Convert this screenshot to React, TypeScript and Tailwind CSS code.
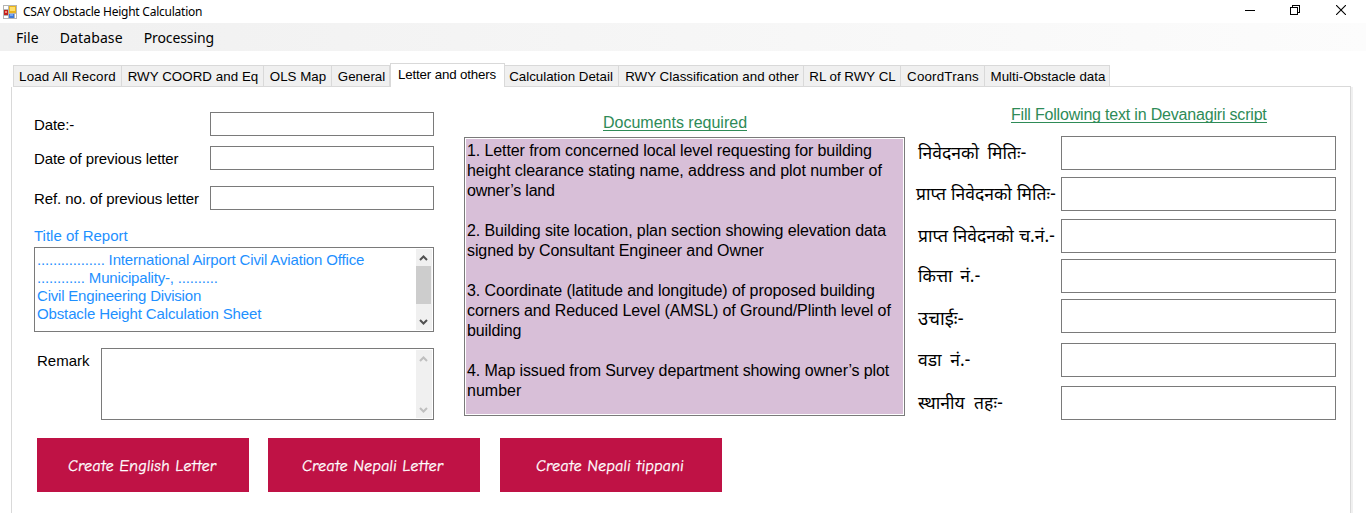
import type { ReactNode } from "react";

function AppIcon() {
  return (
    <svg width="14" height="14" viewBox="0 0 14 14" shapeRendering="crispEdges">
      <rect width="14" height="14" fill="#b4b4b4" />
      <rect x="1" y="1" width="4" height="3" fill="#fff" />
      <rect x="1" y="5" width="4" height="5" fill="#c3201c" />
      <rect x="2" y="6" width="2" height="2" fill="#ef8a78" />
      <rect x="6" y="1" width="7" height="7" fill="#e9b31c" />
      <rect x="7" y="2" width="5" height="4" fill="#ffdf6b" />
      <rect x="1" y="11" width="4" height="2" fill="#fff" />
      <rect x="6" y="9" width="5" height="4" fill="#3f78d8" />
      <rect x="7" y="9" width="3" height="2" fill="#78a7f2" />
      <rect x="12" y="9" width="1" height="4" fill="#fff" />
    </svg>
  );
}

function WindowButtons() {
  return (
    <div className="ml-auto flex items-center pr-5 pb-[3px]">
      <svg width="10" height="10" viewBox="0 0 10 10" shapeRendering="crispEdges" className="mr-[35px]">
        <path d="M0 5.5h10" stroke="#000" />
      </svg>
      <svg width="10" height="10" viewBox="0 0 10 10" fill="none" stroke="#000" shapeRendering="crispEdges" className="mr-[36px]">
        <path d="M.5 2.5h7v7h-7zM2.5 2V.5h7v7H8" />
      </svg>
      <svg width="10" height="10" viewBox="0 0 10 10" stroke="#000" strokeWidth="1.1">
        <path d="M0 0l10 10M10 0L0 10" />
      </svg>
    </div>
  );
}

const tabs = [
  { label: "Load All Record", size: "w-[109px] tracking-[0.18px]" },
  { label: "RWY COORD and Eq", size: "w-[142px] pl-px tracking-[0.05px]" },
  { label: "OLS Map", size: "w-[68px] pl-px" },
  { label: "General", size: "w-[58px] pl-0.5" },
  { label: "Letter and others", size: "w-[115px] pr-px tracking-[-0.15px]", active: true },
  { label: "Calculation Detail", size: "w-[114px] pr-px" },
  { label: "RWY Classification and other", size: "w-[185px] pl-0.5 tracking-[0.03px]" },
  { label: "RL of RWY CL", size: "w-[97px] pl-px" },
  { label: "CoordTrans", size: "w-[84px] pl-px tracking-[0.2px]" },
  { label: "Multi-Obstacle data", size: "w-[125px] pl-0.5" },
];

function TabBar() {
  return (
    <div className="flex h-6 items-end pl-[13px] text-[13.33px] text-black">
      {tabs.map((tab) =>
        tab.active ? (
          <div
            key={tab.label}
            className={`${tab.size} z-10 flex h-6 justify-center border border-b-0 border-[#d9d9d9] bg-white pt-px leading-5 whitespace-nowrap`}
          >
            {tab.label}
          </div>
        ) : (
          <div
            key={tab.label}
            className={`${tab.size} flex h-[22px] justify-center border-t border-r border-b border-[#d9d9d9] bg-[#f0f0f0] leading-[21px] whitespace-nowrap first:border-l`}
          >
            {tab.label}
          </div>
        ),
      )}
      <div className="mr-[15px] h-px flex-1 bg-[#d9d9d9]" />
    </div>
  );
}

function Field({ label, gap }: { label: string; gap: string }) {
  return (
    <label className={`${gap} flex h-6 items-center text-[15px]`}>
      <span className="w-[176px] pt-0.5 tracking-[-0.1px] whitespace-nowrap">{label}</span>
      <input className="h-6 w-[224px] border border-[#7a7a7a] bg-white px-1 outline-none" />
    </label>
  );
}

function ScrollBar({ dim, children }: { dim?: boolean; children?: ReactNode }) {
  const color = dim ? "#bfbfbf" : "#505050";
  return (
    <div className="my-px mr-px flex w-4 shrink-0 flex-col items-center bg-[#f0f0f0]">
      <svg width="16" height="17" viewBox="0 0 16 17" fill="none" stroke={color} strokeWidth="2" className="shrink-0">
        <path d="M4 11L7.5 7.5 11 11" />
      </svg>
      <div className="w-full flex-1">{children}</div>
      <svg width="16" height="17" viewBox="0 0 16 17" fill="none" stroke={color} strokeWidth="2" className="shrink-0">
        <path d="M4 7L7.5 10.5 11 7" />
      </svg>
    </div>
  );
}

function LeftColumn() {
  return (
    <div className="w-[400px]">
      <Field label="Date:-" gap="mt-[25px]" />
      <Field label="Date of previous letter" gap="mt-[10px]" />
      <Field label="Ref. no. of previous letter" gap="mt-4" />
      <div className="mt-4 h-[21px] text-[15px] leading-5 text-[#1e90ff]">Title of Report</div>
      <div className="flex h-[85px] justify-between border border-[#7a7a7a] text-[15px] leading-[18px] text-[#1e90ff]">
        <div className="pt-[3px] pl-0.5 whitespace-pre">
          <div className="tracking-[-0.15px]">
            <span className="tracking-[-0.19px]">................. </span>International Airport Civil Aviation Office
          </div>
          <div className="tracking-[-0.18px]">............ Municipality-, ..........</div>
          <div className="tracking-[-0.2px]">Civil Engineering Division</div>
          <div className="tracking-[-0.13px]">Obstacle Height Calculation Sheet</div>
        </div>
        <ScrollBar>
          <div className="h-[38px] w-[15px] bg-[#cdcdcd]" />
        </ScrollBar>
      </div>
      <div className="mt-4 flex h-[72px] pl-[3px]">
        <div className="w-16 pt-[3px] text-[15px] leading-5">Remark</div>
        <div className="flex flex-1 justify-end border border-[#7a7a7a]">
          <ScrollBar dim />
        </div>
      </div>
    </div>
  );
}

const documents = [
  [
    { text: "1. Letter from concerned local level requesting for building", spacing: "tracking-[-0.1px]" },
    { text: "height clearance stating name, address and plot number of", spacing: "tracking-[-0.04px]" },
    { text: "owner’s land", spacing: "tracking-[-0.2px]" },
  ],
  [
    { text: "2. Building site location, plan section showing elevation data", spacing: "tracking-[-0.1px]" },
    { text: "signed by Consultant Engineer and Owner", spacing: "tracking-[-0.1px]" },
  ],
  [
    { text: "3. Coordinate (latitude and longitude) of proposed building", spacing: "tracking-[-0.07px]" },
    { text: "corners and Reduced Level (AMSL) of Ground/Plinth level of", spacing: "tracking-[-0.1px]" },
    { text: "building", spacing: "tracking-[-0.1px]" },
  ],
  [
    { text: "4. Map issued from Survey department showing owner’s plot", spacing: "tracking-[-0.12px]" },
    { text: "number", spacing: "tracking-normal" },
  ],
];

function DocumentsColumn() {
  return (
    <div className="ml-[30px] w-[441px] pt-[25px] text-[16px] leading-5">
      <div className="flex h-[25px] justify-center pr-[19px] text-[#2e8b57]">
        <span className="h-[19px] border-b border-[#2e8b57] leading-[22px]">Documents required</span>
      </div>
      <div className="h-[279px] border border-[#7a7a7a] p-px">
        <div className="flex h-full flex-col gap-5 bg-[#d8bfd8] pt-0.5 pl-px">
          {documents.map((lines) => (
            <div key={lines[0].text}>
              {lines.map((line) => (
                <div key={line.text} className={`${line.spacing} whitespace-nowrap`}>
                  {line.text}
                </div>
              ))}
            </div>
          ))}
        </div>
      </div>
    </div>
  );
}

const nepaliFields = [
  { label: "निवेदनको मितिः-", gap: "mt-0", look: "pt-[3px] pl-[3px] [word-spacing:4px]" },
  { label: "प्राप्त निवेदनको मितिः-", gap: "mt-[7px]", look: "pt-[3px] pl-px [word-spacing:0.5px]" },
  { label: "प्राप्त निवेदनको च.नं.-", gap: "mt-2", look: "pt-[3px] pl-[3px] [word-spacing:0.5px]" },
  { label: "कित्ता नं.-", gap: "mt-[6px]", look: "pt-[3px] pl-[3px] [word-spacing:3px]" },
  { label: "उचाईः-", gap: "mt-[6px]", look: "pt-[9px] pl-[3px] text-[18.5px]" },
  { label: "वडा नं.-", gap: "mt-[10px]", look: "pt-[3px] pl-[3px] [word-spacing:4px]" },
  { label: "स्थानीय तहः-", gap: "mt-[9px]", look: "pt-[3px] pl-[3px] [word-spacing:5px]" },
];

function NepaliColumn() {
  return (
    <div className="ml-[10px] w-[421px] pt-[17px]">
      <div className="flex h-8 pl-24 text-[16px] text-[#2e8b57]">
        <span className="h-[19px] border-b border-[#2e8b57] leading-[22px] tracking-[-0.19px] whitespace-nowrap">
          Fill Following text in Devanagiri script
        </span>
      </div>
      <div className="text-[17.5px]">
        {nepaliFields.map((f) => (
          <label key={f.label} className={`${f.gap} flex h-[34px] items-center`}>
            <span className={`${f.look} w-[146px] font-['Noto_Sans_Devanagari','Noto_Sans',sans-serif] leading-[34px] whitespace-nowrap`}>
              {f.label}
            </span>
            <input className="h-[34px] w-[275px] border border-[#7a7a7a] bg-white px-1 outline-none" />
          </label>
        ))}
      </div>
    </div>
  );
}

function ActionButton({ size, children }: { size: string; children: ReactNode }) {
  return (
    <button
      className={`${size} flex h-[54px] items-center justify-center bg-[#bf1245] pt-0.5 pr-0.5 font-['Comic_Neue','Lato',sans-serif] text-[16px] font-medium text-white italic [-webkit-text-stroke:0.3px_white] [font-variant-ligatures:none]`}
    >
      <span className="skew-x-[6deg] tracking-[0.16px] whitespace-nowrap">{children}</span>
    </button>
  );
}

export default function App() {
  return (
    <div className="flex h-[513px] w-[1366px] flex-col overflow-hidden bg-white font-['Liberation_Sans',Arial,sans-serif] text-black">
      <header className="flex h-[23px] shrink-0 items-center pl-[3px] font-['Noto_Sans',sans-serif] text-[12px]">
        <AppIcon />
        <h1 className="ml-[6px] tracking-[-0.24px] whitespace-nowrap">CSAY Obstacle Height Calculation</h1>
        <WindowButtons />
      </header>
      <nav className="flex h-7 shrink-0 items-center gap-[21px] bg-linear-to-r from-[#f0f0f0] to-[#fcfcfc] pl-4 font-['Noto_Sans',sans-serif] text-[14px]">
        <span className="tracking-[0.1px]">File</span>
        <span className="tracking-[0.1px]">Database</span>
        <span className="tracking-[-0.1px]">Processing</span>
      </nav>
      <div className="mt-3 shrink-0">
        <TabBar />
      </div>
      <main className="mr-[13px] ml-[11px] min-h-0 flex-1 border-r-2 border-[#f0f0f0]">
        <div className="h-full border-r border-l border-[#d9d9d9] pl-[22px]">
          <div className="flex h-[333px]">
            <LeftColumn />
            <DocumentsColumn />
            <NepaliColumn />
          </div>
          <div className="flex pt-[18px] pl-[3px]">
            <ActionButton size="w-[212px]">Create English Letter</ActionButton>
            <ActionButton size="w-[212px] ml-[19px]">Create Nepali Letter</ActionButton>
            <ActionButton size="w-[222px] ml-5">Create Nepali tippani</ActionButton>
          </div>
        </div>
      </main>
    </div>
  );
}
